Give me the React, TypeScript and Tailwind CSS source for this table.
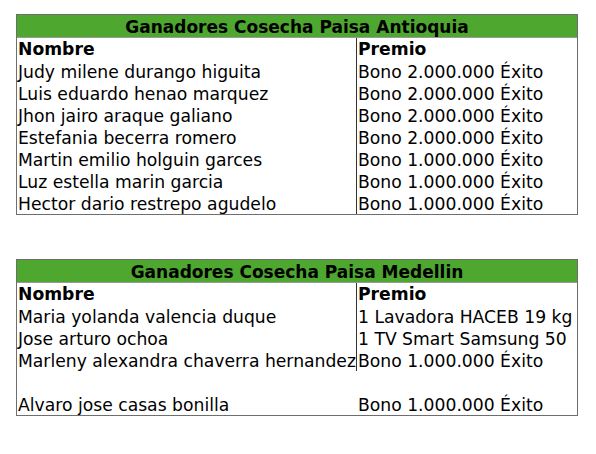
const antioquia = [
  ["Judy milene durango higuita", "Bono 2.000.000 Éxito"],
  ["Luis eduardo henao marquez", "Bono 2.000.000 Éxito"],
  ["Jhon jairo araque galiano", "Bono 2.000.000 Éxito"],
  ["Estefania becerra romero", "Bono 2.000.000 Éxito"],
  ["Martin emilio holguin garces", "Bono 1.000.000 Éxito"],
  ["Luz estella marin garcia", "Bono 1.000.000 Éxito"],
  ["Hector dario restrepo agudelo", "Bono 1.000.000 Éxito"],
];

// last two rows of Medellin have no divider (merged-looking cells)
const medellin = [
  ["Maria yolanda valencia duque", "1 Lavadora HACEB 19 kg", true],
  ["Jose arturo ochoa", "1 TV Smart Samsung 50", true],
  ["Marleny alexandra chaverra hernandez", "Bono 1.000.000 Éxito", true],
  ["", "", false],
  ["Alvaro jose casas bonilla", "Bono 1.000.000 Éxito", false],
] as const;

type Row = readonly [string, string, boolean?];

function WinnersTable({ title, rows }: { title: string; rows: readonly Row[] }) {
  return (
    <div className="w-[562px] border border-[#6e6e6e] bg-white">
      <div className="h-[23px] bg-[#4ea72e] border-b border-[#9a9a9a] text-center font-bold text-[17px] leading-[25px]">
        {title}
      </div>
      <div className="grid grid-cols-[340px_1fr]">
        <div className="h-[22px] leading-[23px] pl-[1px] font-bold border-r border-[#333]">Nombre</div>
        <div className="h-[22px] leading-[23px] pl-[1px] font-bold">Premio</div>
        {rows.map(([name, prize, divider = true], i) => (
          <div key={i} className="contents">
            <div
              className={
                divider
                  ? "h-[22px] leading-[24px] pl-[1px] border-r border-[#333] whitespace-nowrap"
                  : "h-[22px] leading-[24px] pl-[1px] border-r border-transparent whitespace-nowrap"
              }
            >
              {name}
            </div>
            <div className="h-[22px] leading-[24px] pl-[1px] whitespace-nowrap overflow-hidden">{prize}</div>
          </div>
        ))}
      </div>
    </div>
  );
}

export default function App() {
  return (
    <div
      className="w-[596px] h-[454px] bg-white pl-4 pt-[14px] text-[17.2px] text-black"
      style={{ fontFamily: '"DejaVu Sans", Verdana, sans-serif' }}
    >
      <WinnersTable title="Ganadores Cosecha Paisa Antioquia" rows={antioquia} />
      <div className="mt-[44px]">
        <WinnersTable title="Ganadores Cosecha Paisa Medellin" rows={medellin} />
      </div>
    </div>
  );
}
